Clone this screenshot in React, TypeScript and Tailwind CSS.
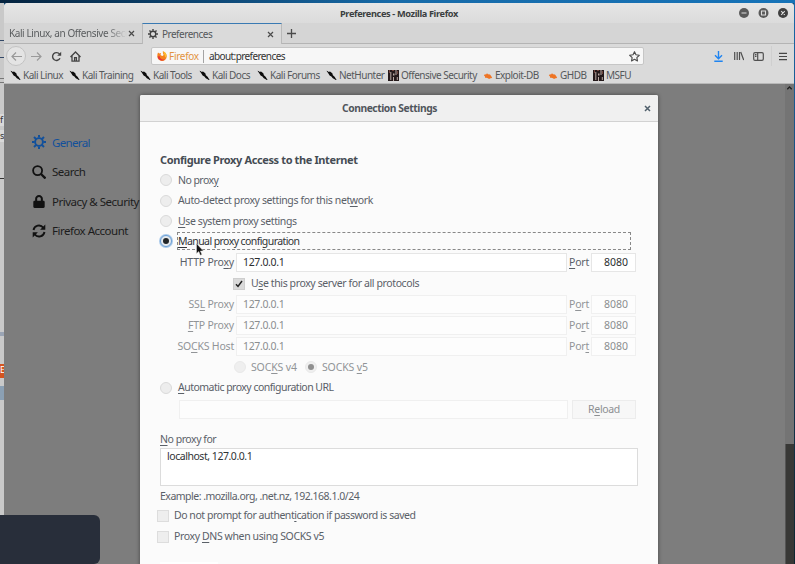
import React from "react";
import { FaLock } from "react-icons/fa";

/* Label text; the letter between underscores is the access key. */
function Label({ text, className = "" }: { text: string; className?: string }) {
  const parts = text.split("_");
  return (
    <span className={`whitespace-pre ${className}`}>
      {parts.map((p, i) =>
        i % 2 ? (
          <u key={i} className="decoration-1 underline-offset-2">
            {p}
          </u>
        ) : (
          p
        ),
      )}
    </span>
  );
}

function Radio({ on, focus, dim }: { on?: boolean; focus?: boolean; dim?: boolean }) {
  return (
    <span
      className={`flex size-[12px] shrink-0 items-center justify-center rounded-full border ${
        focus
          ? "border-[#6b9fd4] bg-[#e6eaee] ring-1 ring-[#a9c9ea]"
          : dim
            ? "border-[#e9e9e9] bg-[#efefef]"
            : "border-[#dadada] bg-[#ededed]"
      }`}
    >
      {on && <span className={`size-[6px] rounded-full ${dim ? "bg-[#8f8f8f]" : "bg-[#222628]"}`} />}
    </span>
  );
}

function Check({ on }: { on?: boolean }) {
  return (
    <span
      className={`flex size-[12px] shrink-0 items-center justify-center border ${
        on ? "border-[#cecece] bg-[#dadada]" : "border-[#dddddd] bg-[#eeeeee]"
      }`}
    >
      {on && (
        <svg width="8" height="8" viewBox="0 0 8 8" fill="none" stroke="#222" strokeWidth="1.5">
          <path d="M1 4.200 3 6.400 7 1" />
        </svg>
      )}
    </span>
  );
}

function Option({ text, on, h, track }: { text: string; on?: boolean; h: string; track: string }) {
  return (
    <div className={`flex items-center pl-[20px] ${h}`}>
      <Radio on={on} />
      <Label text={text} className={`ml-[6px] ${track}`} />
    </div>
  );
}

function ProxyRow({ name, port, dim }: { name: string; port: string; dim?: boolean }) {
  const box = dim ? "border-[#f0f0f0] bg-[#fdfdfd] text-[#8b8e8f]" : "border-[#e6e6e6] bg-white text-[#2b2e30]";
  return (
    <div className={`flex h-[21px] items-center ${dim ? "text-[#919497]" : ""}`}>
      <Label text={name} className="w-[94px] text-right tracking-[-0.2px]" />
      <div className={`ml-[2px] flex h-[19px] w-[331px] items-center border pl-[6px] tracking-[-0.35px] ${box}`}>
        127.0.0.1
      </div>
      <Label text={port} className="ml-[2px] w-[22px] tracking-[-0.2px]" />
      <div className={`flex h-[19px] w-[45px] items-center justify-end border pr-[7px] tracking-[0px] ${box}`}>8080</div>
    </div>
  );
}

function Dragon() {
  return (
    <svg width="11" height="11" viewBox="0 0 11 11" fill="#0c0c0c">
      <path d="M.5.800 2 1.200l.6.8L4 1.400 6.300 3.200l.6 2L8.600 6.700l2 3.200-.8.100L8.200 8.900 6.800 8.200 5.400 6.500 3.600 5.400 2.400 3.400Z" />
    </svg>
  );
}

function Bug() {
  return (
    <svg width="10" height="8" viewBox="0 0 10 8" fill="#ee7424">
      <path d="M.8 3.200 2 2.200 3 2.400 4 1.200 5 2.200 7 2.500 8.300 4.200 9.200 6 7.600 6.300 6 7 5 6.300 3.200 5.800 2 5.800 2 4.600Z" />
    </svg>
  );
}

function Ninja() {
  return (
    <svg width="11" height="11" viewBox="0 0 11 11">
      <rect width="11" height="11" fill="#24191a" />
      <path d="M2.300 2h1v8h-1zM7.500 0h1v5h-1zM5 3.500h1.500v2H5zM5 7h1v4H5zM8.800 7h1v3h-1z" fill="#b9a9a4" />
      <path d="M1 0h1v3H1zM4 0h2v1H4zM9 1h1v3H9z" fill="#73453e" />
    </svg>
  );
}

const bookmarks = [
  { t: "Kali Linux", i: <Dragon />, w: "w-[59px]" },
  { t: "Kali Training", i: <Dragon />, w: "w-[71px]" },
  { t: "Kali Tools", i: <Dragon />, w: "w-[59px]" },
  { t: "Kali Docs", i: <Dragon />, w: "w-[58px]" },
  { t: "Kali Forums", i: <Dragon />, w: "w-[69px]" },
  { t: "NetHunter", i: <Dragon />, w: "w-[62px]" },
  { t: "Offensive Security", i: <Ninja />, w: "w-[95px]" },
  { t: "Exploit-DB", i: <Bug />, w: "w-[65px]" },
  { t: "GHDB", i: <Bug />, w: "w-[45px]" },
  { t: "MSFU", i: <Ninja />, w: "w-[50px]" },
];

function Gear({ size, color }: { size: number; color: string }) {
  return (
    <svg width={size} height={size} viewBox="0 0 14 14" fill="none" stroke={color} className="shrink-0">
      <circle cx="7" cy="7" r="3.900" strokeWidth="1.900" />
      <path
        d="M7 0v2.600M7 11.400V14M0 7h2.600M11.400 7H14M2 2l1.900 1.900M10.100 10.100 12 12M2 12l1.900-1.900M10.100 3.900 12 2"
        strokeWidth="2"
      />
    </svg>
  );
}

function Chrome() {
  return (
    <div className="h-[81px] shrink-0 rounded-t-[4px] bg-[#dadada] text-[10px] tracking-[-0.5px] text-[#55585a]">
      <div className="flex h-[20px] items-center rounded-t-[4px] bg-linear-to-b from-[#e6e6e6] to-[#dbdbdb]">
        <div className="ml-[336px] w-[130px] whitespace-nowrap text-[9.200px] font-bold tracking-[-0.37px] text-[#3b3e40]">
          Preferences - Mozilla Firefox
        </div>
        <svg className="ml-[268px]" width="52" height="12" viewBox="0 0 52 12" fill="none">
          <g fill="#5a5a5a">
            <circle cx="6" cy="6" r="5" />
            <circle cx="25.500" cy="6" r="5" />
            <circle cx="45" cy="6" r="5" fill="#404040" />
          </g>
          <path d="M3.500 6h5M23.500 4h4v4h-4zM43.200 4.200l3.600 3.600m0-3.600-3.600 3.600" stroke="#dedede" strokeWidth="1.100" />
        </svg>
      </div>

      <div className="flex h-[21px]">
        <div className="flex w-[138px] items-center border-b border-[#b4b4b4] bg-[#d5d5d5] pl-[5px]">
          <span className="w-[118px] whitespace-nowrap bg-linear-to-r from-[#55585a] from-82% to-[#d5d5d5] bg-clip-text text-transparent tracking-[-0.42px]">
            Kali Linux, an Offensive Secu
          </span>
          <svg className="ml-px" width="7" height="7" viewBox="0 0 7 7" stroke="#4b4b4b" strokeWidth="1.200">
            <path d="m1 1 5 5m0-5L1 6" />
          </svg>
        </div>
        <div className="flex w-[140px] items-center border-x border-t-[1.500px] border-x-[#b9b9b9] border-t-[#3a7ab3] bg-[#dadada] pl-[5px]">
          <Gear size={10} color="#404040" />
          <span className="ml-[4px] w-[105px]">Preferences</span>
          <svg width="7" height="7" viewBox="0 0 7 7" stroke="#4b4b4b" strokeWidth="1.200">
            <path d="m1 1 5 5m0-5L1 6" />
          </svg>
        </div>
        <div className="flex flex-1 items-center border-b border-[#b4b4b4] bg-[#d5d5d5] pl-[5px]">
          <svg width="9" height="9" viewBox="0 0 9 9" stroke="#4b4b4b" strokeWidth="1.300">
            <path d="M4.500 0v9M0 4.500h9" />
          </svg>
        </div>
      </div>

      <div className="flex h-[24px] items-center">
        <div className="ml-[2px] flex size-[20px] items-center justify-center rounded-full border border-[#c3c3c3] bg-[#e4e4e4]">
          <svg width="11" height="9" viewBox="0 0 11 9" fill="none" stroke="#999" strokeWidth="1.200">
            <path d="M11 4.500H1M5 .5l-4 4 4 4" />
          </svg>
        </div>
        <svg className="ml-[5px]" width="11" height="9" viewBox="0 0 11 9" fill="none" stroke="#9a9a9a" strokeWidth="1.200">
          <path d="M0 4.500h10M6 .5l4 4-4 4" />
        </svg>
        <svg className="ml-[9px]" width="11" height="11" viewBox="0 0 11 11" fill="none" stroke="#444" strokeWidth="1.400">
          <path d="M8.600 3.200A3.900 3.900 0 1 0 9 7.200" />
          <path d="M10.200.8v4H6.200z" fill="#444" stroke="none" />
        </svg>
        <svg className="ml-[8px]" width="11" height="11" viewBox="0 0 11 11" fill="none" stroke="#444" strokeWidth="1.300">
          <path d="M.5 6 5.500 1l5 5M2 5v5.200h7V5M4.600 10V6.700h1.800V10" />
        </svg>
        <div className="ml-[70px] flex h-[18px] w-[493px] items-center rounded-[2px] border border-[#c6c6c6] bg-[#f7f7f7]">
          <svg className="ml-[5px]" width="10" height="10" viewBox="0 0 10 10">
            <path
              d="M1 1.500 2.300 2.600 4 2 3.500 4l1.600.9C6.500 5 7 3.600 6 2.500L5.800.2C8.300.8 9.800 3 9.700 5.400A4.700 4.700 0 0 1 .3 5.200C.3 3.800.5 2.600 1 1.500Z"
              fill="#f5821f"
            />
            <path d="M.6 5.500A4.500 4.500 0 0 0 8 8.500C5.500 9 3 8 2.500 5Z" fill="#e5353a" />
            <path d="M6 .3c2 .8 3.600 2.500 3.500 5L8 6.500C8.200 4 6.500 2.500 6 .3Z" fill="#fcc02e" />
          </svg>
          <span className="ml-[2px] w-[34px] tracking-[-0.3px] text-[#e2933f]">Firefox</span>
          <span className="h-[13px] w-px bg-[#a4a4a4]" />
          <span className="ml-[5px] w-[420px] tracking-[-0.6px] text-[#333]">about:preferences</span>
          <svg width="11" height="11" viewBox="0 0 24 24" fill="none" stroke="#4d4d4d" strokeWidth="2.500" strokeLinejoin="round">
            <path d="m12 1.500 3.200 6.800 7.300.9-5.400 5.100 1.400 7.400L12 18.100l-6.500 3.600 1.400-7.400L1.500 9.200l7.300-.9z" />
          </svg>
        </div>
        <svg className="ml-[70px]" width="9" height="11" viewBox="0 0 9 11" fill="none" stroke="#1f84f0" strokeWidth="1.400">
          <path d="M4.500 0v7.500M1 4.200l3.500 3.500L8 4.200M.3 10.200h8.400" />
        </svg>
        <svg className="ml-[11px]" width="10" height="10" viewBox="0 0 10 10" fill="none" stroke="#505050" strokeWidth="1.200">
          <path d="M.7 1v8M3.200 1v8M5.500 1v8M6.700 1l3 8" />
        </svg>
        <svg className="ml-[9px]" width="11" height="9" viewBox="0 0 11 9" fill="none" stroke="#505050" strokeWidth="1.200">
          <rect x=".7" y=".7" width="9.600" height="7.600" rx="1.300" />
          <path d="M4.700 1v7M2 2.700h1.500M2 4.400h1.500" />
        </svg>
        <span className="ml-[7px] h-[20px] w-px bg-[#cfcfcf]" />
        <svg className="ml-[7px]" width="8" height="9" viewBox="0 0 8 9" stroke="#474747" strokeWidth="1.200">
          <path d="M0 1.300h8M0 4.500h8M0 7.700h8" />
        </svg>
      </div>

      <div className="flex h-[16px] items-center border-b border-[#b8b8b8] pl-[6px]">
        {bookmarks.map((b) => (
          <div key={b.t} className={`flex shrink-0 items-center gap-[2px] whitespace-nowrap ${b.w}`}>
            <span className="shrink-0">{b.i}</span>
            {b.t}
          </div>
        ))}
      </div>
    </div>
  );
}

function Sidebar() {
  return (
    <div className="flex w-[140px] flex-col whitespace-nowrap pl-[28px] pt-[43px] text-[11.500px] tracking-[-0.5px] text-[#1c1c1c]">
      <div className="flex h-[30px] items-center gap-[6px] text-[#12509b]">
        <Gear size={14} color="#12509b" />
        <span className="tracking-[-0.65px]">General</span>
      </div>
      <div className="flex h-[29px] items-center gap-[6px]">
        <svg width="14" height="14" viewBox="0 0 14 14" fill="none" stroke="#111">
          <circle cx="5.600" cy="5.600" r="4.500" strokeWidth="1.800" />
          <path d="m9 9 4.500 4.500" strokeWidth="2.300" />
        </svg>
        Search
      </div>
      <div className="flex h-[30px] items-center gap-[6px]">
        <FaLock size={13} className="w-[14px] shrink-0" color="#111" />
        Privacy &amp; Security
      </div>
      <div className="flex h-[29px] items-center gap-[6px]">
        <svg width="14" height="14" viewBox="0 0 14 14" fill="none" stroke="#111" strokeWidth="1.900">
          <path d="M1.500 6A5.500 5.500 0 0 1 11.300 3.700M12.500 8A5.500 5.500 0 0 1 2.700 10.300" />
          <path d="M13.300.5v5.200H8.100zM.7 13.500V8.300h5.200z" fill="#111" stroke="none" />
        </svg>
        Firefox Account
      </div>
    </div>
  );
}

function Dialog() {
  return (
    <div className="absolute left-[136px] top-[11px] flex h-[480px] w-[518px] flex-col rounded-t-[2px] bg-[#fbfbfb] tracking-[-0.46px] text-[#5a6068] shadow-[0_0_4px_rgba(0,0,0,0.45)]">
      <div className="flex h-[27px] shrink-0 items-center rounded-t-[2px] border-b border-[#d2d2d2] bg-[#f0f0f0]">
        <span className="ml-[202px] w-[302px] text-[10.300px] font-bold tracking-[-0.45px] text-[#50565c]">
          Connection Settings
        </span>
        <svg width="7" height="7" viewBox="0 0 7 7" stroke="#51606c" strokeWidth="1.500">
          <path d="m1 1 5 5m0-5L1 6" />
        </svg>
      </div>
      <div className="mt-[27px] flex h-[20px] shrink-0 items-center whitespace-nowrap pl-[20px] text-[11px] font-bold tracking-[-0.38px] text-[#454c54]">
        Configure Proxy Access to the Internet
      </div>
      <div className="h-px" />
      <Option h="h-[20px]" track="tracking-[-0.55px]" text="No prox_y_" />
      <Option h="h-[21px]" track="tracking-[-0.38px]" text="Auto-detect proxy settings for this net_w_ork" />
      <Option h="h-[20px]" track="tracking-[-0.4px]" text="_U_se system proxy settings" />
      <div className="flex h-[20px] items-center pl-[20px]">
        <Radio on focus />
        <div className="ml-[5px] flex h-[18px] w-[454px] items-center border border-dashed border-[#888] text-[#303438]">
          <Label text="_M_anual proxy configuration" className="tracking-[-0.58px]" />
        </div>
      </div>
      <div className="h-px" />
      <ProxyRow name="HTTP Pro_x_y" port="_P_ort" />
      <div className="flex h-[21px] items-center pl-[93px]">
        <Check on />
        <Label text="U_s_e this proxy server for all protocols" className="ml-[6px] tracking-[-0.39px]" />
      </div>
      <ProxyRow dim name="SS_L_ Proxy" port="P_o_rt" />
      <ProxyRow dim name="_F_TP Proxy" port="Po_r_t" />
      <ProxyRow dim name="SO_C_KS Host" port="Por_t_" />
      <div className="flex h-[20px] items-center pl-[94px] tracking-[-0.15px] text-[#919497]">
        <Radio dim />
        <Label text="SOC_K_S v4" className="ml-[5px] w-[54px]" />
        <Radio on dim />
        <Label text="SOCKS _v_5" className="ml-[5px]" />
      </div>
      <Option h="h-[21px]" track="tracking-[-0.52px]" text="_A_utomatic proxy configuration URL" />
      <div className="flex h-[23px] items-center pl-[39px]">
        <div className="h-[19px] w-[389px] border border-[#f0f0f0] bg-[#fdfdfd]" />
        <div className="ml-[4px] flex h-[19px] w-[64px] items-center justify-center border border-[#ececec] bg-[#f7f7f7] text-[#8c8f92]">
          <Label text="R_e_load" className="tracking-[-0.35px]" />
        </div>
      </div>
      <div className="mt-[9px] flex h-[18px] items-center pl-[20px]">
        <Label text="_N_o proxy for" />
      </div>
      <div className="ml-[20px] h-[38px] w-[478px] shrink-0 border border-[#dcdcdc] bg-white pl-[6px] text-[#303436]">
        localhost, 127.0.0.1
      </div>
      <div className="mt-[2px] flex h-[17px] items-center pl-[20px] tracking-[-0.5px]">
        Example: .mozilla.org, .net.nz, 192.168.1.0/24
      </div>
      <div className="flex h-[21px] items-center pl-[17px]">
        <Check />
        <Label text="Do not prompt for authent_i_cation if password is saved" className="ml-[5px]" />
      </div>
      <div className="flex h-[21px] items-center pl-[17px]">
        <Check />
        <Label text="Proxy _D_NS when using SOCKS v5" className="ml-[5px] tracking-[-0.38px]" />
      </div>
      <div className="ml-[20px] mt-[15px] h-[2px] w-[58px] bg-white" />
    </div>
  );
}

export default function App() {
  return (
    <div className="relative flex h-[564px] w-[795px] flex-col overflow-hidden bg-[#174f7c] font-['Noto_Sans','Open_Sans',sans-serif] text-[10.500px] leading-[15px]">
      <div className="h-[3px] shrink-0 bg-linear-to-r from-[#05233f] via-[#176ba9] to-[#1673b8]" />
      <div className="flex h-[561px]">
        <div className="flex w-[4px] shrink-0 flex-col overflow-hidden bg-[#c9c9c9] text-[9px] leading-[12px] text-[#333]">
          <div className="mt-[37px] h-[18px] border-y border-[#334867]" />
          <div className="mt-[20px] h-[5px] border-y border-[#777]" />
          <div className="mt-[31px] h-[12px] bg-[#d9d9d9]">f</div>
          <div className="mt-[4px] h-[12px] bg-[#d9d9d9]">s</div>
          <div className="mt-[36px] h-px bg-[#333]" />
          <div className="mt-[153px] h-[4px] bg-[#9aa4b4]" />
          <div className="mt-[28px] h-[14px] bg-[#d45420] text-white">E</div>
          <div className="mt-[8px] h-[14px] bg-[#8ba0b4]" />
        </div>
        <div className="flex w-[790px] shrink-0 flex-col">
          <Chrome />
          <div className="relative flex flex-1 justify-between overflow-hidden bg-[#7d7d7d]">
            <Sidebar />
            <div className="flex w-[9px] flex-col bg-[#747474]">
              <svg className="ml-[2px] mt-[2px]" width="5" height="4" viewBox="0 0 5 4" fill="none" stroke="#222" strokeWidth="1.300">
                <path d="M.3 3.200 2.500 1l2.200 2.200" />
              </svg>
              <div className="mt-auto h-[120px] border-l border-[#555] bg-[#383836]" />
            </div>
            <Dialog />
          </div>
        </div>
        <div className="flex-1 bg-linear-to-b from-[#1769aa] via-[#173d61] to-[#0e2630]" />
      </div>
      <div className="absolute -left-2 top-[515px] h-[49px] w-[108px] rounded-[6px] bg-[#282e3a]" />
      <svg className="absolute left-[196px] top-[243px]" width="8" height="13" viewBox="0 0 8 13" fill="#111" stroke="#ddd" strokeWidth=".5">
        <path d="M.5.500v10l2.300-2 1.500 3.800 1.600-.7L4.400 8h3z" />
      </svg>
    </div>
  );
}
